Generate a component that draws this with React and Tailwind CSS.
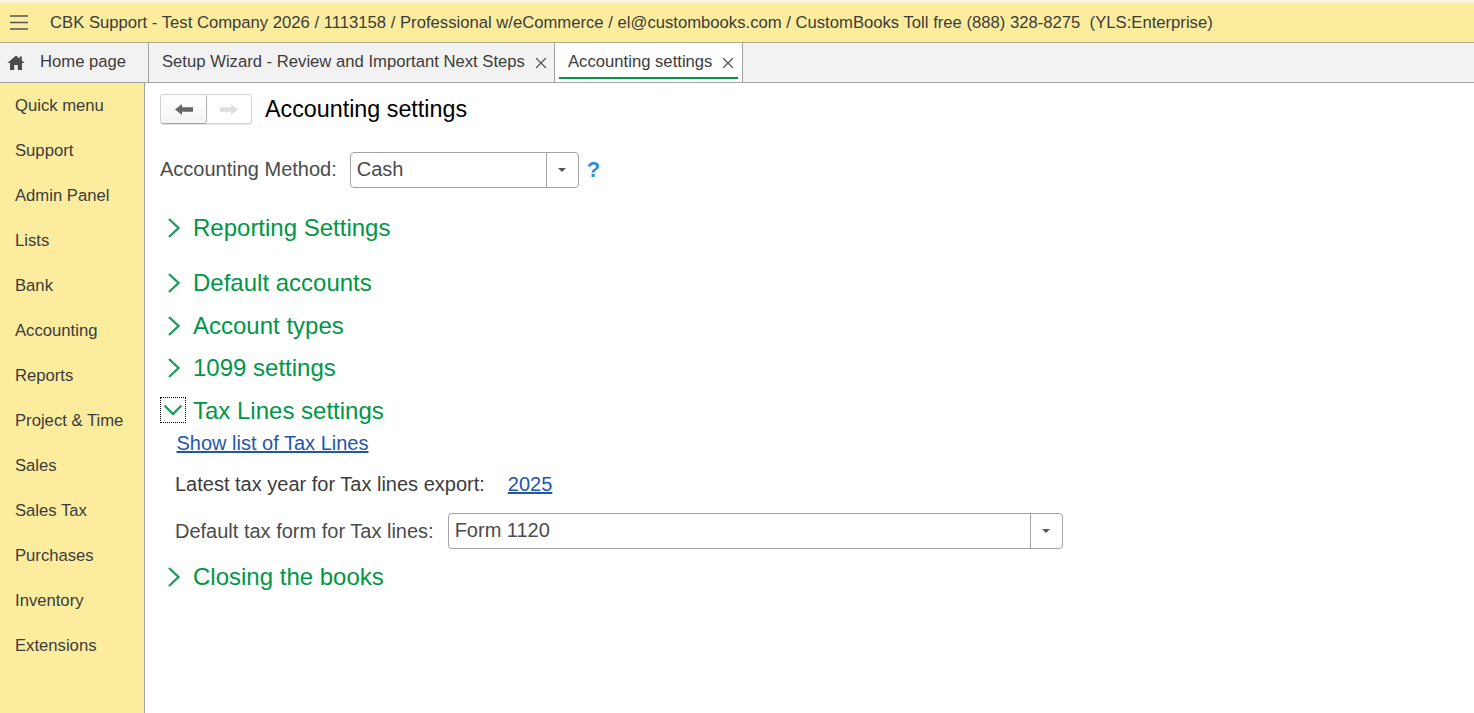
import React from 'react';
import { X } from 'lucide-react';

const menuItems = [
  'Quick menu', 'Support', 'Admin Panel', 'Lists', 'Bank', 'Accounting', 'Reports',
  'Project & Time', 'Sales', 'Sales Tax', 'Purchases', 'Inventory', 'Extensions',
];

function Caret() {
  return <div className="w-0 h-0 border-x-[4px] border-x-transparent border-t-[4px] border-t-[#555]" />;
}

function Select({ value, width }) {
  return (
    <div className={`flex h-[36px] ${width} rounded-[4px] border border-[#a3a3a3] bg-white`}>
      <div className="flex-1 pl-[6px] text-[20px] leading-[33px] text-[#4b4b4b]">{value}</div>
      <div className="flex w-[32px] items-center justify-center border-l border-[#a3a3a3]">
        <Caret />
      </div>
    </div>
  );
}

function Section({ title, className = '' }) {
  return (
    <div className={`flex h-[30px] items-center ${className}`}>
      <svg viewBox="0 0 14 22" className="ml-[7px] h-[22px] w-[14px]" fill="none" stroke="#1f9d5c" strokeWidth="2.4">
        <path d="M2 2 L11.5 11 L2 20" />
      </svg>
      <span className="ml-[12px] text-[24px] text-[#009646]">{title}</span>
    </div>
  );
}

export default function App() {
  return (
    <div className="flex h-[713px] w-[1474px] flex-col overflow-hidden bg-white font-['Liberation_Sans',Arial,sans-serif]">
      <div className="h-[3px] bg-[#fdf3dc]" />
      <div className="flex h-[40px] items-center border-b border-[#b0a988] bg-[#fbec9e] text-[#3c3c3c]">
        <svg viewBox="0 0 18 15" className="ml-[10px] h-[15px] w-[18px]" stroke="#555" strokeWidth="1.4">
          <path d="M0 1 H18 M0 7.5 H18 M0 14 H18" />
        </svg>
        <span className="ml-[22px] whitespace-pre text-[16.67px]">
          CBK Support - Test Company 2026 / 1113158 / Professional w/eCommerce / el@custombooks.com / CustomBooks Toll free (888) 328-8275  (YLS:Enterprise)
        </span>
      </div>

      <div className="flex h-[40px] border-b border-[#a3a3a3] bg-[#f2f2f2] text-[16.67px] text-[#3c3c3c]">
        <div className="flex w-[149px] items-center border-r border-[#a3a3a3] pb-[2px]">
          <svg viewBox="0 0 18 15" className="ml-[7px] mt-[2px] h-[15px] w-[18px]" fill="#4b4b4b">
            <path d="M9 0.5 L0.5 8 H3 V15 H7.3 V10 H10.7 V15 H15 V8 H17.5 L14.8 5.6 V1.5 H12.6 V3.7 Z" />
          </svg>
          <span className="ml-[15px]">Home page</span>
        </div>
        <div className="flex w-[406px] items-center border-r border-[#a3a3a3] pb-[2px] pl-[13px]">
          <span>Setup Wizard - Review and Important Next Steps</span>
          <X className="ml-[7px] mt-[2px] w-[18px] h-[18px] text-[#555]" strokeWidth={1.6} />
        </div>
        <div className="relative flex w-[188px] items-center border-r border-[#a3a3a3] bg-white pb-[2px] pl-[13px]">
          <span>Accounting settings</span>
          <X className="ml-[7px] mt-[2px] w-[18px] h-[18px] text-[#555]" strokeWidth={1.6} />
          <div className="absolute bottom-[3px] left-[4px] right-[4px] h-[2px] bg-[#009646]" />
        </div>
      </div>

      <div className="flex flex-1">
        <div className="w-[145px] border-r border-[#a3a3a3] bg-[#fbec9e]">
          {menuItems.map((item) => (
            <div key={item} className="h-[45px] pl-[15px] text-[16.67px] leading-[45px] text-[#3c3c3c]">
              {item}
            </div>
          ))}
        </div>

        <div className="flex-1 pl-[15px]">
          <div className="mt-[11px] flex h-[30px] items-center">
            <div className="flex h-[30px] w-[92px] rounded-[3px] border border-[#d4d4d4] shadow-[0_1px_1px_rgba(0,0,0,0.1)]">
              <div className="flex w-[46px] items-center justify-center rounded-[3px] border-r border-[#b5b5b5] bg-gradient-to-b from-white to-[#f4f4f4] shadow-[0_1px_1px_rgba(0,0,0,0.25)]">
                <svg viewBox="0 0 18 11" className="h-[11px] w-[18px]" fill="#666">
                  <path d="M0 5.5 L7 0 V3.2 H18 V7.8 H7 V11 Z" />
                </svg>
              </div>
              <div className="flex flex-1 items-center justify-center">
                <svg viewBox="0 0 18 11" className="h-[11px] w-[18px]" fill="#dedede">
                  <path d="M18 5.5 L11 0 V3.2 H0 V7.8 H11 V11 Z" />
                </svg>
              </div>
            </div>
            <h1 className="ml-[13px] text-[23.3px] text-black">Accounting settings</h1>
          </div>

          <div className="mt-[28px] flex items-center text-[20px] text-[#4b4b4b]">
            <span className="pb-[2px]">Accounting Method:</span>
            <Select value="Cash" width="ml-[13px] w-[229px]" />
            <span className="ml-[8px] pb-[2px] text-[22px] font-bold text-[#2f8fce]">?</span>
          </div>

          <Section title="Reporting Settings" className="mt-[25px]" />
          <Section title="Default accounts" className="mt-[25px]" />
          <Section title="Account types" className="mt-[13px]" />
          <Section title="1099 settings" className="mt-[12px]" />

          <div className="mt-[13px] flex h-[30px] items-center">
            <div className="mb-[2px] flex h-[26px] w-[26px] items-center justify-center border border-dotted border-black">
              <svg viewBox="0 0 20 12" className="h-[12px] w-[20px]" fill="none" stroke="#1f9d5c" strokeWidth="2.4">
                <path d="M1.5 1.5 L10 10 L18.5 1.5" />
              </svg>
            </div>
            <span className="ml-[7px] text-[24px] text-[#009646]">Tax Lines settings</span>
          </div>

          <div className="pl-[15px]">
            <a href="#" className="ml-[1.5px] mt-[4px] block text-[20px] leading-[27px] text-[#1f56ad] underline">
              Show list of Tax Lines
            </a>
            <div className="mt-[14px] flex h-[26px] items-center text-[20px] text-[#3c3c3c]">
              <span>Latest tax year for Tax lines export:</span>
              <a href="#" className="ml-[23px] text-[#1f56ad] underline">2025</a>
            </div>
            <div className="mt-[16px] flex items-center text-[20px] text-[#4b4b4b]">
              <span>Default tax form for Tax lines:</span>
              <Select value="Form 1120" width="ml-[14px] w-[615px]" />
            </div>
          </div>

          <Section title="Closing the books" className="mt-[13px]" />
        </div>
      </div>
    </div>
  );
}
